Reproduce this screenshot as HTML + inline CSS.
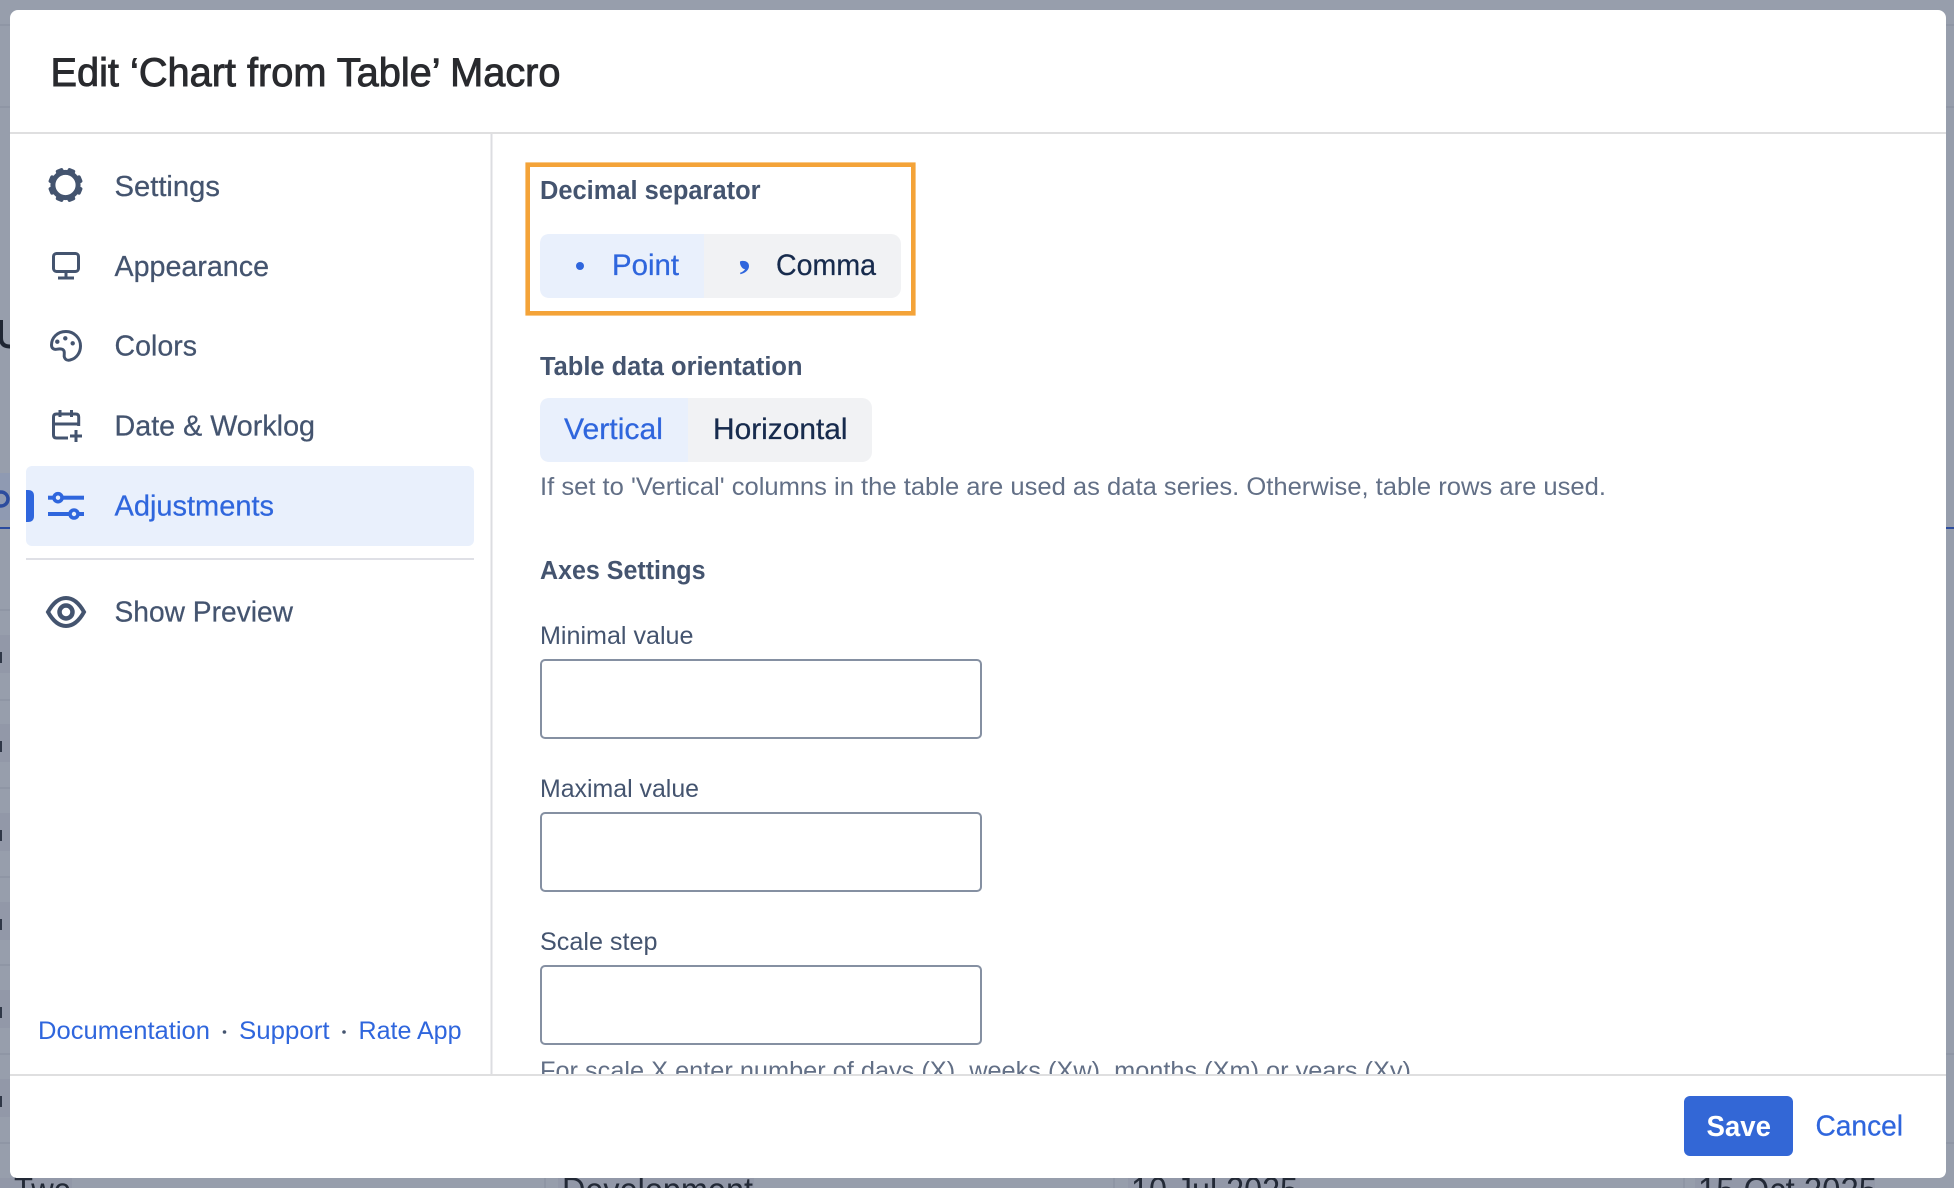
<!DOCTYPE html>
<html lang="en"><head><meta charset="utf-8"><title>Edit Macro</title>
<style>
html,body{margin:0;padding:0;background:#979eac;width:1954px;height:1188px;overflow:hidden}
svg{display:block;position:absolute;left:0;top:0}
text{font-family:"Liberation Sans",sans-serif;white-space:pre}
.nav{font-size:28.5px;fill:#44546f;stroke:#44546f;stroke-width:.25px}
.lab{font-size:25px;fill:#44546f}
.bold{font-size:25.5px;font-weight:bold;fill:#44546f}
.help{font-size:25px;fill:#626f86}
.link{font-size:25px;fill:#2f66dd}
.seg{font-size:29.5px;stroke-width:.25px}
.bg{font-size:35px;fill:#222936}
</style></head><body>
<svg width="1954" height="1188" viewBox="0 0 1954 1188" xmlns="http://www.w3.org/2000/svg">
<rect width="1954" height="1188" fill="#979eac"/>
<!-- background page -->
<g fill="#8f96a5">
<rect y="24" width="10" height="2"/><rect y="106" width="10" height="2"/>
<rect x="1946" y="24" width="8" height="2"/><rect x="1946" y="106" width="8" height="2"/>
<rect y="609" width="10" height="2"/><rect y="699" width="10" height="2"/><rect y="787" width="10" height="2"/><rect y="876" width="10" height="2"/><rect y="964" width="10" height="2"/><rect y="1053" width="10" height="2"/><rect y="1142" width="10" height="2"/>
<rect x="1946" y="1053" width="8" height="2"/><rect x="1946" y="1142" width="8" height="2"/>
<rect x="544" y="1178" width="2" height="10"/><rect x="1113" y="1178" width="2" height="10"/><rect x="1683" y="1178" width="2" height="10"/>
</g>
<g fill="#9298a8">
<rect y="635" width="10" height="38"/><rect y="724" width="10" height="38"/><rect y="813" width="10" height="38"/><rect y="902" width="10" height="38"/><rect y="990" width="10" height="38"/><rect y="1079" width="10" height="38"/>
<rect x="0" y="1178" width="72" height="10"/><rect x="558" y="1178" width="196" height="10"/><rect x="1128" y="1178" width="172" height="10"/><rect x="1695" y="1178" width="180" height="10"/>
</g>
<rect y="473" width="10" height="47" fill="#8f9ab2"/>
<rect y="527" width="10" height="2" fill="#2c4c9e"/><rect x="1946" y="527" width="8" height="2" fill="#2c4c9e"/>
<circle cx="1" cy="499" r="7" fill="none" stroke="#2c4c9e" stroke-width="3.5"/>
<path d="M1 320V338Q1 346.5 10 346.5" fill="none" stroke="#1f2633" stroke-width="4"/>
<g fill="#2f3747"><rect y="652" width="2" height="11"/><rect y="741" width="2" height="11"/><rect y="830" width="2" height="11"/><rect y="919" width="2" height="11"/><rect y="1007" width="2" height="11"/><rect y="1096" width="2" height="11"/></g>
<text class="bg" x="14" y="1202" textLength="57" lengthAdjust="spacingAndGlyphs">Two</text>
<text class="bg" x="562" y="1202" textLength="191" lengthAdjust="spacingAndGlyphs">Development</text>
<text class="bg" x="1131" y="1202" textLength="167" lengthAdjust="spacingAndGlyphs">10 Jul 2025</text>
<text class="bg" x="1698" y="1202" textLength="179" lengthAdjust="spacingAndGlyphs">15 Oct 2025</text>

<!-- dialog -->
<rect x="10" y="10" width="1936" height="1168" rx="8" fill="#fff"/>
<text x="50.5" y="86" font-size="40" fill="#292a2e" stroke="#292a2e" stroke-width=".9" textLength="510" lengthAdjust="spacingAndGlyphs">Edit ‘Chart from Table’ Macro</text>
<rect x="10" y="132" width="1936" height="2" fill="#dfdfe0"/>
<rect x="490.5" y="134" width="2" height="941" fill="#dcdde1"/>

<!-- nav -->
<g fill="#44546f">
<circle cx="65.5" cy="185" r="12.6" fill="none" stroke="#44546f" stroke-width="5"/>
<g transform="rotate(22.5 65.5 185)">
<rect x="61.5" y="167.7" width="8" height="7" rx="2"/>
<rect x="61.5" y="195.3" width="8" height="7" rx="2"/>
<rect x="61.5" y="167.7" width="8" height="7" rx="2" transform="rotate(45 65.5 185)"/>
<rect x="61.5" y="195.3" width="8" height="7" rx="2" transform="rotate(45 65.5 185)"/>
<rect x="61.5" y="167.7" width="8" height="7" rx="2" transform="rotate(90 65.5 185)"/>
<rect x="61.5" y="195.3" width="8" height="7" rx="2" transform="rotate(90 65.5 185)"/>
<rect x="61.5" y="167.7" width="8" height="7" rx="2" transform="rotate(135 65.5 185)"/>
<rect x="61.5" y="195.3" width="8" height="7" rx="2" transform="rotate(135 65.5 185)"/>
</g>
</g>
<g fill="none" stroke="#44546f" stroke-width="3">
<rect x="53.5" y="253.5" width="25" height="18" rx="3"/>
<path d="M66 272V278M58 278H74"/>
<path d="M66 331.5C57 331.5 51.5 338 51.5 345C51.5 348.5 54 349.8 57 349.2C60 348.6 63 348.6 64 351C65 353.5 63.5 355 64.5 357.5C65.5 360 68 360.6 70 360C77 358.5 80.5 352 80.5 346C80.5 338 74 331.5 66 331.5Z"/>
<path d="M78.7 426V417Q78.7 414 75.7 414H56.5Q53.5 414 53.5 417V435Q53.5 438 56.5 438H68M53.5 424H78.7M60 410V417M71.5 410V417M76 430V442M70 436H82"/>
<path d="M48 612C53 603 59 598 66 598C73 598 79 603 84 612C79 621 73 626 66 626C59 626 53 621 48 612Z" stroke-width="4"/>
<circle cx="66" cy="612" r="6.5" stroke-width="4.5"/>
</g>
<g fill="#44546f"><circle cx="57.3" cy="341.7" r="2.2"/><circle cx="65.3" cy="338.3" r="2.2"/><circle cx="72.7" cy="343.3" r="2.2"/></g>

<text class="nav" x="114.5" y="196" textLength="105.5" lengthAdjust="spacingAndGlyphs">Settings</text>
<text class="nav" x="114.5" y="276" textLength="154.5" lengthAdjust="spacingAndGlyphs">Appearance</text>
<text class="nav" x="114.5" y="355.5" textLength="82.5" lengthAdjust="spacingAndGlyphs">Colors</text>
<text class="nav" x="114.5" y="435.5" textLength="200.5" lengthAdjust="spacingAndGlyphs">Date &amp; Worklog</text>

<rect x="26" y="466" width="448" height="80" rx="6" fill="#e9f0fc"/>
<path d="M26 490H28Q34 490 34 496V516Q34 522 28 522H26Z" fill="#2f66dd"/>
<g fill="#2f66dd">
<rect x="48" y="495.7" width="36" height="4"/><rect x="48" y="512" width="36" height="4"/>
<circle cx="58" cy="497.7" r="5.8"/><circle cx="74" cy="514" r="5.8"/>
</g>
<circle cx="58" cy="497.7" r="2.2" fill="#e9f0fc"/><circle cx="74" cy="514" r="2.2" fill="#e9f0fc"/>
<text class="nav" x="114.5" y="515.5" textLength="159.5" lengthAdjust="spacingAndGlyphs" style="fill:#2f66dd;stroke:#2f66dd">Adjustments</text>
<rect x="26" y="558" width="448" height="2" fill="#dfe0e6"/>
<text class="nav" x="114.5" y="621.5" textLength="178.5" lengthAdjust="spacingAndGlyphs">Show Preview</text>

<!-- sidebar links -->
<text class="link" x="38" y="1039" textLength="172" lengthAdjust="spacingAndGlyphs">Documentation</text>
<circle cx="224.5" cy="1032" r="1.8" fill="#44546f"/>
<text class="link" x="239" y="1039" textLength="90.5" lengthAdjust="spacingAndGlyphs">Support</text>
<circle cx="344" cy="1032" r="1.8" fill="#44546f"/>
<text class="link" x="358.5" y="1039" textLength="103" lengthAdjust="spacingAndGlyphs">Rate App</text>

<!-- content -->
<rect x="527.7" y="164.7" width="385.6" height="148.6" fill="none" stroke="#f4a338" stroke-width="4.6"/>
<text class="bold" x="540" y="199" textLength="220.5" lengthAdjust="spacingAndGlyphs">Decimal separator</text>
<rect x="540" y="234" width="361" height="64" rx="10" fill="#f1f2f4"/>
<path d="M704 234H550Q540 234 540 244V288Q540 298 550 298H704Z" fill="#e9f0fc"/>
<circle cx="580" cy="266" r="4" fill="#2f66dd"/>
<text class="seg" x="612" y="275" textLength="67" lengthAdjust="spacingAndGlyphs" fill="#2f66dd" stroke="#2f66dd">Point</text>
<path d="M740 261.5C743 260 749 261 749 266C749 270 745.5 273 740.5 274.2L740 272.8C742.5 272 744.5 270.5 745 269C742.5 269.5 739.5 265 740 261.5Z" fill="#2f66dd"/>
<text class="seg" x="776" y="275" textLength="100" lengthAdjust="spacingAndGlyphs" fill="#172b4d" stroke="#172b4d">Comma</text>

<text class="bold" x="540" y="375" textLength="262.5" lengthAdjust="spacingAndGlyphs">Table data orientation</text>
<rect x="540" y="398" width="332" height="64" rx="10" fill="#f1f2f4"/>
<path d="M688 398H550Q540 398 540 408V452Q540 462 550 462H688Z" fill="#e9f0fc"/>
<text class="seg" x="564" y="439" textLength="99" lengthAdjust="spacingAndGlyphs" fill="#2f66dd" stroke="#2f66dd">Vertical</text>
<text class="seg" x="713" y="439" textLength="134.5" lengthAdjust="spacingAndGlyphs" fill="#172b4d" stroke="#172b4d">Horizontal</text>
<text class="help" x="540" y="495" textLength="1066" lengthAdjust="spacingAndGlyphs">If set to 'Vertical' columns in the table are used as data series. Otherwise, table rows are used.</text>

<text class="bold" x="540" y="579" textLength="165.5" lengthAdjust="spacingAndGlyphs">Axes Settings</text>
<text class="lab" x="540" y="644" textLength="153.5" lengthAdjust="spacingAndGlyphs">Minimal value</text>
<rect x="541" y="660" width="440" height="78" rx="4" fill="#fff" stroke="#8590a2" stroke-width="2"/>
<text class="lab" x="540" y="797" textLength="159" lengthAdjust="spacingAndGlyphs">Maximal value</text>
<rect x="541" y="813" width="440" height="78" rx="4" fill="#fff" stroke="#8590a2" stroke-width="2"/>
<text class="lab" x="540" y="950" textLength="117.5" lengthAdjust="spacingAndGlyphs">Scale step</text>
<rect x="541" y="966" width="440" height="78" rx="4" fill="#fff" stroke="#8590a2" stroke-width="2"/>
<text class="help" x="540" y="1079" textLength="878" lengthAdjust="spacingAndGlyphs">For scale X enter number of days (X), weeks (Xw), months (Xm) or years (Xy).</text>

<!-- footer -->
<path d="M10 1075H1946V1170Q1946 1178 1938 1178H18Q10 1178 10 1170Z" fill="#fff"/>
<rect x="10" y="1074" width="1936" height="2" fill="#dfdfe0"/>
<rect x="1684" y="1096" width="109" height="60" rx="6" fill="#3367d6"/>
<text x="1706.5" y="1136" font-size="28.5" font-weight="bold" fill="#fff" textLength="64.5" lengthAdjust="spacingAndGlyphs">Save</text>
<text x="1815.5" y="1135.5" font-size="28.5" fill="#2f66dd" stroke="#2f66dd" stroke-width=".25" textLength="87.5" lengthAdjust="spacingAndGlyphs">Cancel</text>
</svg>
</body></html>
